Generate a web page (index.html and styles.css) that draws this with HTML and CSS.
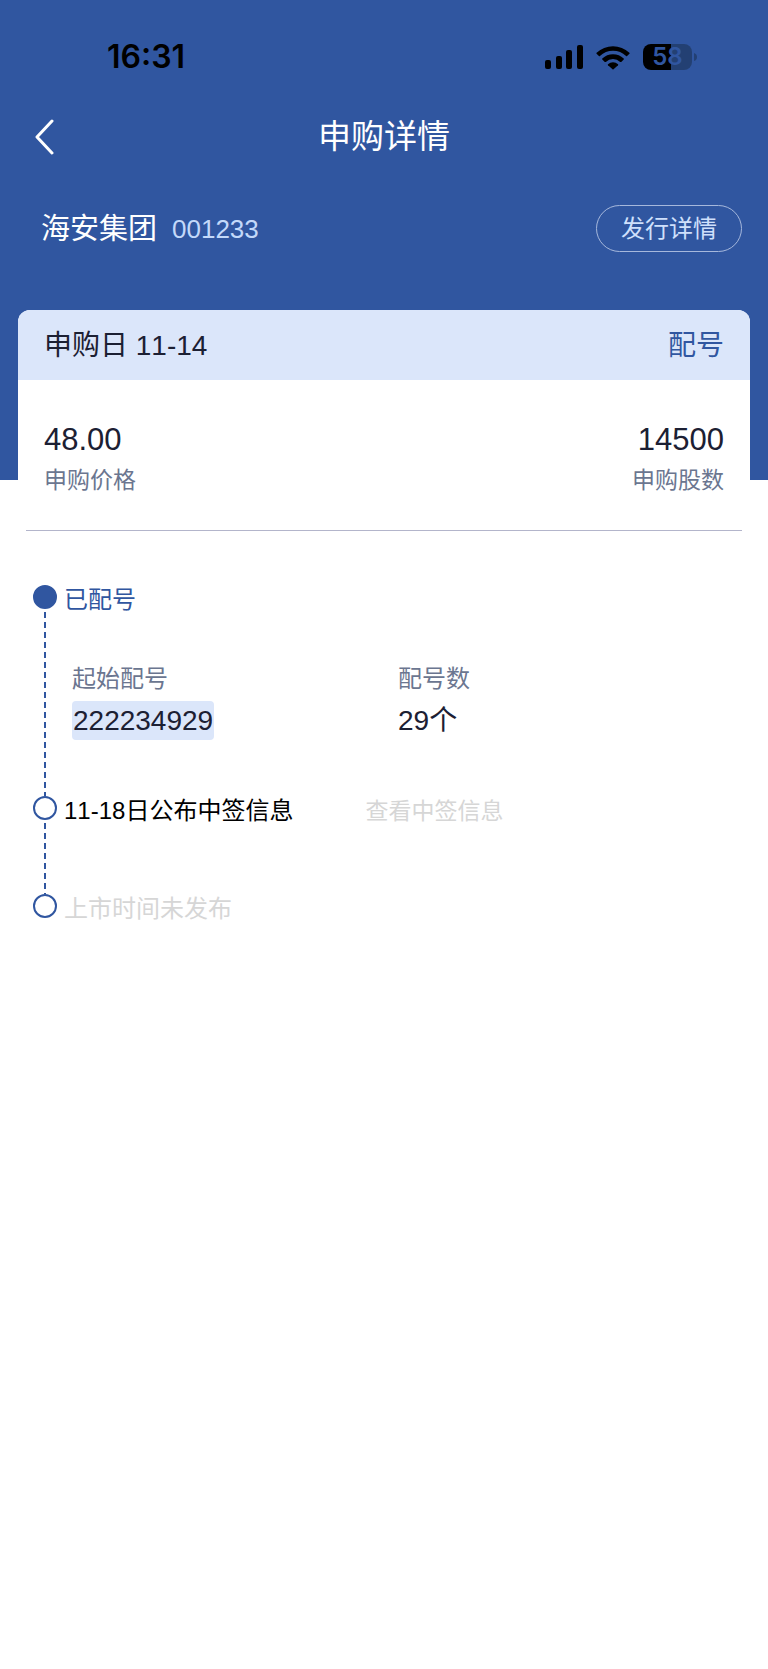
FILE: index.html
```html
<!DOCTYPE html>
<html lang="zh-CN">
<head>
<meta charset="utf-8">
<meta name="viewport" content="width=device-width, initial-scale=1">
<title>申购详情</title>
<link rel="stylesheet" href="styles.css">
</head>
<body>
<div class="screen">
  <div class="status">
    <span class="status-time">16:31</span>
    <div class="status-icons">
      <svg class="signal" width="38" height="26" viewBox="0 0 38 26" aria-hidden="true">
        <rect x="0" y="16" width="6" height="9" rx="2"/>
        <rect x="11" y="12" width="6" height="13" rx="2"/>
        <rect x="21" y="6" width="6" height="19" rx="2"/>
        <rect x="32" y="1" width="6" height="24" rx="2"/>
      </svg>
      <svg class="wifi" width="34" height="26" viewBox="0 0 34 26" aria-hidden="true">
        <path d="M0.6 8.8A23.6 23.6 0 0 1 33.4 8.8Q33.9 9.3 33.4 9.8L31.1 12Q30.6 12.400 30.1 12A19 19 0 0 0 3.900 12Q3.400 12.400 2.900 12L0.600 9.800Q0.100 9.300 0.600 8.800Z"/>
        <path d="M6.300 14.500A15.500 15.500 0 0 1 27.700 14.500Q28.200 15 27.700 15.500L25.200 17.900Q24.700 18.300 24.200 17.900A10.600 10.600 0 0 0 9.800 17.900Q9.300 18.300 8.800 17.900L6.300 15.500Q5.800 15 6.300 14.500Z"/>
        <path d="M12 20.200A7.400 7.400 0 0 1 22 20.200Q22.500 20.700 22 21.200L17.500 25.200Q17 25.600 16.500 25.200L12 21.200Q11.500 20.700 12 20.200Z"/>
      </svg>
      <div class="battery">
        <span class="battery-level">58</span>
        <svg width="3" height="8" viewBox="0 0 3 8" aria-hidden="true"><path d="M0 0Q3 1 3 4Q3 7 0 8Z"/></svg>
      </div>
    </div>
  </div>

  <header class="navbar">
    <button class="back" type="button" aria-label="返回">
      <svg width="20" height="36" viewBox="0 0 20 36" aria-hidden="true"><path d="M17 2L2 18L17 34"/></svg>
    </button>
    <h1 class="title">申购详情</h1>
  </header>

  <section class="company">
    <h2 class="company-name">海安集团</h2>
    <span class="company-code">001233</span>
    <button class="issue" type="button">发行详情</button>
  </section>

  <main class="card">
    <div class="card-head">
      <span>申购日 11-14</span>
      <span class="state">配号</span>
    </div>
    <dl class="figures">
      <div class="figure">
        <dt>申购价格</dt>
        <dd>48.00</dd>
      </div>
      <div class="figure figure-end">
        <dt>申购股数</dt>
        <dd>14500</dd>
      </div>
    </dl>
    <ol class="timeline">
      <li class="step step-done">
        <div class="rail"><span class="dot"></span><span class="line"></span></div>
        <div class="step-body">
          <p class="step-title">已配号</p>
          <dl class="details">
            <div class="detail">
              <dt>起始配号</dt>
              <dd><span class="number">222234929</span></dd>
            </div>
            <div class="detail">
              <dt>配号数</dt>
              <dd>29个</dd>
            </div>
          </dl>
        </div>
      </li>
      <li class="step">
        <div class="rail"><span class="dot"></span><span class="line"></span></div>
        <div class="step-body step-row">
          <p class="step-title">11-18日公布中签信息</p>
          <button class="result" type="button" disabled>查看中签信息</button>
        </div>
      </li>
      <li class="step step-pending">
        <div class="rail"><span class="dot"></span></div>
        <div class="step-body">
          <p class="step-title">上市时间未发布</p>
        </div>
      </li>
    </ol>
  </main>
</div>
</body>
</html>
```
FILE: styles.css
```css
:root {
  --blue: #3056a0;
  --pale: #dbe6fa;
  --ink: #1c2033;
  --muted: #6b7690;
  --faint: #d6d6d6;
}

* {
  box-sizing: border-box;
}

body {
  margin: 0;
  background: #fff;
  color: var(--ink);
  font-family: "Liberation Sans", "Noto Sans CJK SC", sans-serif;
  font-weight: 400;
  font-kerning: none;
}

h1, h2, p, dl, dd, ol {
  margin: 0;
  padding: 0;
  font-weight: inherit;
}

ol {
  list-style: none;
}

button {
  padding: 0;
  border: 0;
  background: none;
  color: inherit;
  font: inherit;
}

.screen {
  min-height: 100vh;
  background: linear-gradient(var(--blue) 480px, #fff 480px);
}

/* Status bar */
.status {
  display: flex;
  align-items: center;
  justify-content: space-between;
  padding: 36px 71px 0 107px;
  height: 77px;
  color: #000;
  font-family: Inter, sans-serif;
}

.status-time {
  font-size: 32px;
  line-height: 40px;
  font-weight: 600;
}

.status-icons {
  display: flex;
  align-items: center;
}

.wifi {
  margin: 0 13px;
}

.battery {
  display: flex;
  align-items: center;
  gap: 2px;
}

.battery svg {
  fill: #234073;
}

.battery-level {
  width: 49px;
  border-radius: 8px;
  background: linear-gradient(90deg, #000 58%, #234073 58%);
  color: var(--blue);
  font-size: 24px;
  line-height: 26px;
  font-weight: 600;
  text-align: center;
}

/* Navigation bar */
.navbar {
  display: grid;
  grid-template-columns: 1fr auto 1fr;
  align-items: center;
  height: 120px;
  padding: 0 35px;
  color: #fff;
}

.back {
  display: flex;
  width: 20px;
}

.back svg {
  fill: none;
  stroke: #fff;
  stroke-width: 3;
  stroke-linecap: round;
  stroke-linejoin: round;
}

.title {
  font-size: 33px;
  line-height: 48px;
}

/* Company */
.company {
  display: flex;
  align-items: center;
  gap: 15px;
  padding: 8px 26px 58px 41px;
}

.company-name {
  color: #fff;
  font-size: 29px;
  line-height: 44px;
}

.company-code {
  color: #c3d9fa;
  font-size: 26px;
  line-height: 44px;
}

.issue {
  margin-left: auto;
  padding: 0 24px;
  border: 1px solid #a6b8dc;
  border-radius: 24px;
  color: #cfe0fc;
  font-size: 24px;
  line-height: 45px;
}

/* Card */
.card {
  margin: 0 18px;
  border-radius: 12px 12px 0 0;
  background: #fff;
}

.card-head {
  display: flex;
  justify-content: space-between;
  padding: 1px 26px 0;
  border-radius: 12px 12px 0 0;
  background: var(--pale);
  font-size: 28px;
  line-height: 69px;
}

.state {
  color: var(--blue);
}

.figures {
  display: flex;
  justify-content: space-between;
  margin: 0 8px;
  padding: 38px 18px 32px;
  border-bottom: 1px solid #b3b5cb;
}

.figure {
  display: flex;
  flex-direction: column-reverse;
}

.figure-end {
  text-align: right;
}

.figure dt {
  color: var(--muted);
  font-size: 23px;
  line-height: 36px;
}

.figure dd {
  font-size: 31px;
  line-height: 44px;
}

/* Timeline */
.timeline {
  padding: 54px 8px 0 15px;
}

.step {
  display: flex;
  gap: 7px;
}

.rail {
  display: flex;
  flex-direction: column;
  align-items: center;
  width: 24px;
}

.dot {
  width: 24px;
  height: 24px;
  border: 2px solid var(--blue);
  border-radius: 50%;
}

.step-done .dot {
  background: var(--blue);
}

.line {
  flex: 1;
  width: 2px;
  margin-top: 3px;
  background: repeating-linear-gradient(var(--blue) 0 6px, transparent 6px 10px);
}

.step-body {
  flex: 1;
}

.step-title {
  color: #000;
  font-size: 24px;
  line-height: 30px;
}

.step-done .step-title {
  color: var(--blue);
}

.step-pending .step-title {
  color: var(--faint);
}

.step-row {
  display: flex;
  gap: 72px;
  align-items: flex-start;
  padding-bottom: 68px;
}

.result {
  color: var(--faint);
  font-size: 23px;
  line-height: 30px;
}

.details {
  display: grid;
  grid-template-columns: 1fr 1fr;
  padding: 46px 18px 56px 8px;
}

.detail dt {
  margin-bottom: 4px;
  color: var(--muted);
  font-size: 24px;
  line-height: 36px;
}

.detail dd {
  font-size: 28px;
  line-height: 39px;
}

.number {
  display: inline-block;
  padding: 0 1px;
  border-radius: 4px;
  background: var(--pale);
}
```
